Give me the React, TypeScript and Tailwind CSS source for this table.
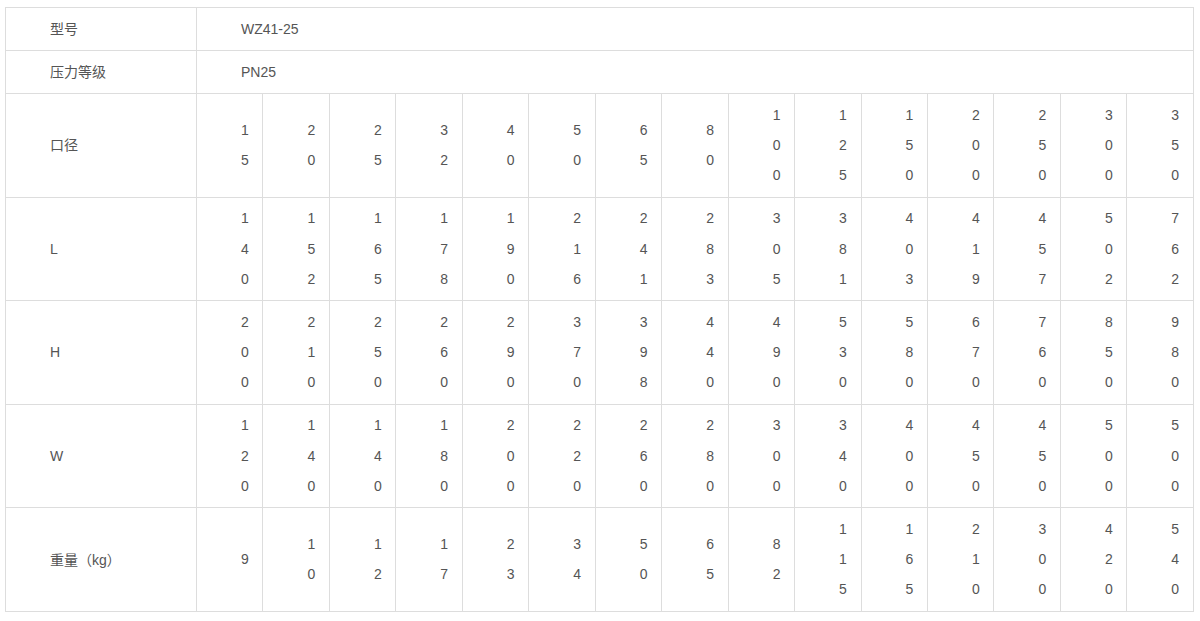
import React from "react";

const sizes = ["15","20","25","32","40","50","65","80","100","125","150","200","250","300","350"];
const L = ["140","152","165","178","190","216","241","283","305","381","403","419","457","502","762"];
const H = ["200","210","250","260","290","370","398","440","490","530","580","670","760","850","980"];
const W = ["120","140","140","180","200","220","260","280","300","340","400","450","450","500","500"];
const KG = ["9","10","12","17","23","34","50","65","82","115","165","210","300","420","540"];

const cell = "border border-[#dddddd] py-[5.875px] align-middle";
const label = `${cell} pl-[44px] pr-2 w-[191px]`;
const dataCell = `${cell} pl-[44px] pr-[10px] break-all`;

function Row({ name, values }: { name: React.ReactNode; values: string[] }) {
  return (
    <tr>
      <td className={label}>{name}</td>
      {values.map((v, i) => (
        <td key={i} className={dataCell}>{v}</td>
      ))}
    </tr>
  );
}

const cjk = { fontFamily: '"Noto Sans CJK SC", sans-serif' };

export default function App() {
  return (
    <div className="bg-white w-[1200px] h-[621px] pt-[7px] pl-[5px]" style={{ fontFamily: '"Liberation Sans", Arial, "Noto Sans CJK SC", sans-serif' }}>
      <table className="w-[1189px] table-fixed border-collapse text-[14px] leading-[30.25px] text-[#555555]">
        <tbody>
          <tr>
            <td className={label}>型号</td>
            <td className={`${cell} pl-[44px]`} colSpan={15}>WZ41-25</td>
          </tr>
          <tr>
            <td className={label}>压力等级</td>
            <td className={`${cell} pl-[44px]`} colSpan={15}>PN25</td>
          </tr>
          <Row name="口径" values={sizes} />
          <Row name="L" values={L} />
          <Row name="H" values={H} />
          <Row name="W" values={W} />
          <Row
            name={<>重量<span style={cjk}>（</span>kg<span style={cjk}>）</span></>}
            values={KG}
          />
        </tbody>
      </table>
    </div>
  );
}
